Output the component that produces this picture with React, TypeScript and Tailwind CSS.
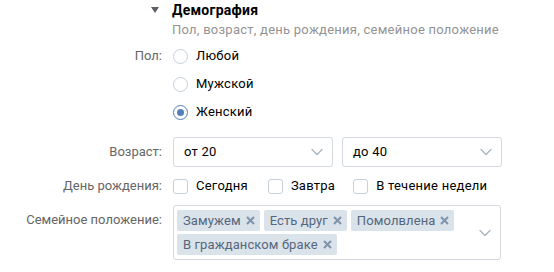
import React from "react";

const font = { fontFamily: "Roboto, 'Liberation Sans', Arial, sans-serif" };

function Chevron() {
  return (
    <svg width="12" height="8" viewBox="0 0 12 8" fill="none">
      <path d="M1 1.5 L6 6.5 L11 1.5" stroke="#aab4bf" strokeWidth="1.3" strokeLinecap="round" strokeLinejoin="round" />
    </svg>
  );
}

function Radio({ label, checked }: { label: string; checked?: boolean }) {
  return (
    <div className="flex items-center h-7">
      <span
        className={`w-[15px] h-[15px] rounded-full border flex items-center justify-center ${checked ? "border-[#5181b8]" : "border-[#c5d0db]"}`}
      >
        {checked && <span className="w-[7px] h-[7px] rounded-full bg-[#5181b8]" />}
      </span>
      <span className="ml-[8px] text-[13px] text-black">{label}</span>
    </div>
  );
}

function Check({ label, className = "" }: { label: string; className?: string }) {
  return (
    <div className={`flex items-center ${className}`}>
      <span className="w-[15px] h-[15px] rounded-[3px] border border-[#c5d0db]" />
      <span className="ml-[8px] text-[13px] text-black">{label}</span>
    </div>
  );
}

function Tag({ label }: { label: string }) {
  return (
    <span className="h-[21px] flex items-center bg-[#dae2ea] rounded-[2px] pl-[6px] pr-[5px] text-[13px] text-[#55677d] tracking-[0.1px]">
      {label}
      <svg className="ml-[5px]" width="9" height="9" viewBox="0 0 9 9">
        <path d="M1 1 L8 8 M8 1 L1 8" stroke="#7f93ab" strokeWidth="2" />
      </svg>
    </span>
  );
}

function Select({ value }: { value: string }) {
  return (
    <div className="w-[160px] h-[30px] border border-[#d3d9de] rounded-[3px] flex items-center justify-between pl-[10px] pr-[9px] text-[13px] text-black">
      <span>{value}</span>
      <Chevron />
    </div>
  );
}

export default function App() {
  return (
    <div className="w-[554px] h-[272px] bg-white overflow-hidden tracking-[0.25px]" style={font}>
      <div className="grid grid-cols-[162px_330px] gap-x-[11px]">
        {/* header */}
        <div className="flex justify-end items-center h-5 pr-[3px]">
          <svg width="8" height="6" viewBox="0 0 8 6">
            <path d="M0 0 H8 L4 6 Z" fill="#5b6066" />
          </svg>
        </div>
        <div className="h-5 flex items-center -ml-[1px] text-[14px] font-bold text-black">Демография</div>
        <div />
        <div className="h-5 flex items-center -ml-[1px] text-[13px] text-[#939393]">
          Пол, возраст, день рождения, семейное положение
        </div>

        {/* gender */}
        <div className="mt-[2px] h-7 flex items-center justify-end text-[13px] text-[#656565] tracking-normal">Пол:</div>
        <div className="mt-[2px] flex flex-col">
          <Radio label="Любой" />
          <Radio label="Мужской" />
          <Radio label="Женский" checked />
        </div>

        {/* age */}
        <div className="mt-[11px] h-[30px] flex items-center justify-end text-[13px] text-[#656565] tracking-normal">Возраст:</div>
        <div className="mt-[11px] flex gap-[9px]">
          <Select value="от 20" />
          <Select value="до 40" />
        </div>

        {/* birthday */}
        <div className="mt-[5px] h-7 flex items-center justify-end text-[13px] text-[#656565] tracking-normal">День рождения:</div>
        <div className="mt-[5px] h-7 flex items-center">
          <Check label="Сегодня" />
          <Check label="Завтра" className="ml-[20px]" />
          <Check label="В течение недели" className="ml-[18px]" />
        </div>

        {/* marital */}
        <div className="mt-[10px] h-5 flex items-center justify-end text-[13px] text-[#656565] tracking-normal">Семейное положение:</div>
        <div className="mt-[5px] w-[328px] h-[55px] border border-[#d3d9de] rounded-[3px] flex items-center pl-[3px] pr-[9px]">
          <div className="flex flex-wrap gap-x-[4px] gap-y-[3px] flex-1 w-[280px]">
            <Tag label="Замужем" />
            <Tag label="Есть друг" />
            <Tag label="Помолвлена" />
            <Tag label="В гражданском браке" />
          </div>
          <Chevron />
        </div>
      </div>
    </div>
  );
}
